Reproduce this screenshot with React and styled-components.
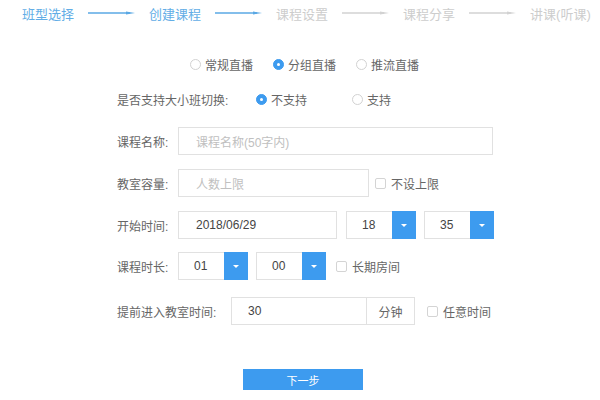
import React from 'react'
import styled, { createGlobalStyle } from 'styled-components'

const GlobalStyle = createGlobalStyle`
	* { box-sizing: border-box; }
	body {
		margin: 0;
		background: #fff;
		font-family: 'Liberation Sans', 'Noto Sans CJK SC', sans-serif;
		color: #666;
	}
`

const Page = styled.div`
	width: 600px;
	height: 400px;
	overflow: hidden;
`

const Steps = styled.div`
	display: flex;
	align-items: center;
	gap: 14px;
	height: 26px;
	padding-left: 22px;
	font-size: 13px;
`

const Step = styled.span`
	color: ${(p) => (p.$active ? '#62ade6' : '#cdcdcd')};
	white-space: nowrap;
`

const Form = styled.div`
	padding-left: 117px;
`

const Row = styled.div`
	display: flex;
	align-items: center;
	height: ${(p) => p.$h || 28}px;
	margin-top: ${(p) => p.$mt || 0}px;
	padding-left: ${(p) => p.$indent || 0}px;
	font-size: 12px;
`

const Label = styled.div`
	width: ${(p) => p.$w}px;
	flex-shrink: 0;
	color: #666;
`

const Option = styled.label`
	display: flex;
	align-items: center;
	gap: 4px;
	min-width: ${(p) => p.$w || 0}px;
	margin-right: ${(p) => p.$mr || 0}px;
	color: #666;
`

const Radio = styled.span`
	width: 11px;
	height: 11px;
	border-radius: 50%;
	flex-shrink: 0;
	border: 1px solid ${(p) => (p.$on ? '#3d9bef' : '#d2d2d2')};
	background: ${(p) => (p.$on ? '#3d9bef' : '#fff')};
	display: flex;
	align-items: center;
	justify-content: center;

	&::after {
		content: '';
		width: 3px;
		height: 3px;
		border-radius: 50%;
		background: ${(p) => (p.$on ? '#fff' : 'transparent')};
	}
`

const Check = styled.span`
	width: 11px;
	height: 11px;
	border: 1px solid #d4d4d4;
	border-radius: 2px;
	background: #fff;
	flex-shrink: 0;
`

const CheckOption = styled(Option)`
	margin-left: ${(p) => p.$ml}px;
	gap: 5px;
`

const Input = styled.div`
	width: ${(p) => p.$w}px;
	height: 28px;
	border: 1px solid #e1e1e1;
	display: flex;
	align-items: center;
	padding-left: ${(p) => p.$pl || 17}px;
	color: ${(p) => (p.$placeholder ? '#c0c0c0' : '#444')};
	margin-right: ${(p) => p.$mr || 0}px;
	flex-shrink: 0;
`

const Select = styled.div`
	width: 70px;
	height: 28px;
	border: 1px solid #e1e1e1;
	display: flex;
	margin-right: ${(p) => p.$mr || 0}px;
	flex-shrink: 0;
`

const SelectValue = styled.div`
	flex: 1;
	display: flex;
	align-items: center;
	padding-left: 15px;
	color: #444;
`

const Caret = styled.div`
	width: 24px;
	margin: -1px -1px -1px 0;
	background: #3d9bef;
	display: flex;
	align-items: center;
	justify-content: center;

	&::after {
		content: '';
		border-left: 3px solid transparent;
		border-right: 3px solid transparent;
		border-top: 3px solid #fff;
	}
`

const Group = styled.div`
	width: 184px;
	height: 28px;
	border: 1px solid #e1e1e1;
	display: flex;
	flex-shrink: 0;
`

const GroupValue = styled.div`
	flex: 1;
	display: flex;
	align-items: center;
	padding-left: 16px;
	color: #444;
`

const Addon = styled.div`
	width: 48px;
	border-left: 1px solid #e1e1e1;
	display: flex;
	align-items: center;
	justify-content: center;
	color: #666;
`

const ButtonRow = styled.div`
	margin-top: 44px;
	padding-left: 126px;
`

const Button = styled.button`
	width: 120px;
	height: 21px;
	border: none;
	background: #3d9bef;
	color: #fff;
	font-family: inherit;
	font-size: 11px;
	padding: 0;
`

const Arrow = ({ active }) => {
	const c = active ? '#5aa8e4' : '#d2d2d2'
	return (
		<svg width='47' height='6' viewBox='0 0 47 6'>
			<line x1='0' y1='3' x2='42' y2='3' stroke={c} strokeWidth='1.3' />
			<path d='M38 1.6 L47 3 L38 4.4 Z' fill={c} />
		</svg>
	)
}

const steps = ['班型选择', '创建课程', '课程设置', '课程分享', '讲课(听课)']

const App = () => (
	<Page>
		<GlobalStyle />
		<Steps>
			{steps.map((s, i) => (
				<React.Fragment key={s}>
					{i > 0 && <Arrow active={i <= 2} />}
					<Step $active={i < 2}>{s}</Step>
				</React.Fragment>
			))}
		</Steps>
		<Form>
			<Row $h={20} $mt={28} $indent={73}>
				<Option $mr={20}>
					<Radio />
					常规直播
				</Option>
				<Option $mr={20}>
					<Radio $on />
					分组直播
				</Option>
				<Option>
					<Radio />
					推流直播
				</Option>
			</Row>
			<Row $h={20} $mt={15}>
				<Label $w={139}>是否支持大小班切换:</Label>
				<Option $w={96}>
					<Radio $on />
					不支持
				</Option>
				<Option>
					<Radio />
					支持
				</Option>
			</Row>
			<Row $mt={18}>
				<Label $w={61}>课程名称:</Label>
				<Input $w={315} $placeholder>课程名称(50字内)</Input>
			</Row>
			<Row $mt={14}>
				<Label $w={61}>教室容量:</Label>
				<Input $w={191} $placeholder>人数上限</Input>
				<CheckOption $ml={6}>
					<Check />
					不设上限
				</CheckOption>
			</Row>
			<Row $mt={14}>
				<Label $w={61}>开始时间:</Label>
				<Input $w={159} $mr={9}>2018/06/29</Input>
				<Select $mr={8}>
					<SelectValue>18</SelectValue>
					<Caret />
				</Select>
				<Select>
					<SelectValue>35</SelectValue>
					<Caret />
				</Select>
			</Row>
			<Row $mt={13}>
				<Label $w={61}>课程时长:</Label>
				<Select $mr={8}>
					<SelectValue>01</SelectValue>
					<Caret />
				</Select>
				<Select>
					<SelectValue>00</SelectValue>
					<Caret />
				</Select>
				<CheckOption $ml={10}>
					<Check />
					长期房间
				</CheckOption>
			</Row>
			<Row $mt={17}>
				<Label $w={114}>提前进入教室时间:</Label>
				<Group>
					<GroupValue>30</GroupValue>
					<Addon>分钟</Addon>
				</Group>
				<CheckOption $ml={12}>
					<Check />
					任意时间
				</CheckOption>
			</Row>
			<ButtonRow>
				<Button>下一步</Button>
			</ButtonRow>
		</Form>
	</Page>
)

export default App
